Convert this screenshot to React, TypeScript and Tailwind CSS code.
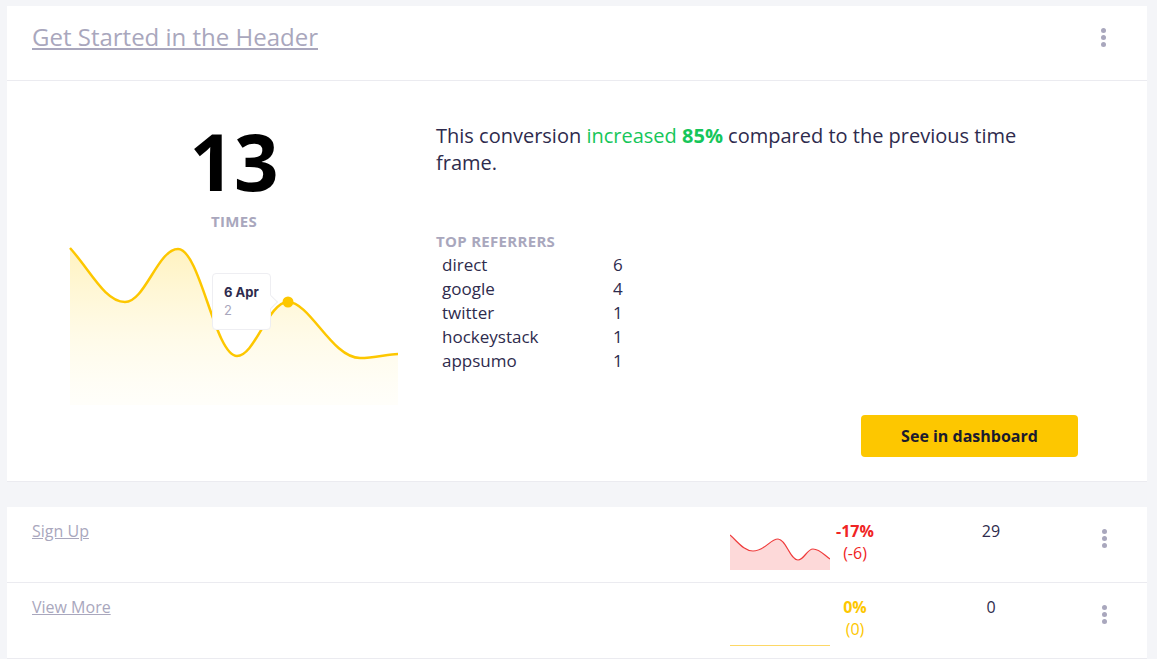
import React from "react";

const Kebab = () => (
  <div className="flex flex-col gap-[2px] items-center">
    <span className="w-[5px] h-[5px] rounded-full bg-[#a9a7bd]" />
    <span className="w-[5px] h-[5px] rounded-full bg-[#a9a7bd]" />
    <span className="w-[5px] h-[5px] rounded-full bg-[#a9a7bd]" />
  </div>
);

const MainChart = () => (
  <div className="relative w-[328px] h-[160px]">
    <svg width="328" height="160" viewBox="0 0 328 160" className="absolute inset-0 overflow-visible">
      <defs>
        <linearGradient id="yg" x1="0" y1="0" x2="0" y2="1">
          <stop offset="0%" stopColor="#ffe680" stopOpacity="0.5" />
          <stop offset="100%" stopColor="#fff6cc" stopOpacity="0.1" />
        </linearGradient>
      </defs>
      <path
        d="M0,3 C20,25 35,57 55,57 C75,57 88,4 108,4 C130,4 145,111 167,111 C185,111 198,57 218,57 C240,57 262,113 290,113 C305,113 318,109 328,109 L328,160 L0,160 Z"
        fill="url(#yg)"
      />
      <path
        d="M0,3 C20,25 35,57 55,57 C75,57 88,4 108,4 C130,4 145,111 167,111 C185,111 198,57 218,57 C240,57 262,113 290,113 C305,113 318,109 328,109"
        fill="none"
        stroke="#fdc700"
        strokeWidth="2.5"
      />
      <circle cx="218" cy="57" r="5.5" fill="#fdc700" />
    </svg>
    <div className="absolute left-[142px] top-[28px] w-[59px] h-[57px] bg-white border border-[#eeeef2] rounded-[4px] pl-[11px] pt-[9px] [font-family:Inter,'Liberation_Sans',sans-serif]">
      <div className="text-[13px] font-bold text-[#2e2b4d] leading-[18px]">6 Apr</div>
      <div className="text-[13px] text-[#a9a7bd] leading-[18px]">2</div>
      <div className="absolute right-[-6px] top-[23px] w-[10px] h-[10px] bg-white rotate-45 border-t border-r border-[#eeeef2]" />
    </div>
  </div>
);

const RedSpark = () => (
  <svg width="100" height="36" viewBox="0 0 100 36">
    <path
      d="M0,1 C8,8 14,17 23,17 C35,17 40,5 48,5 C56,5 60,26 68,26 C74,26 77,15 83,15 C90,15 95,22 100,25 L100,36 L0,36 Z"
      fill="#fdd9d9"
    />
    <path
      d="M0,1 C8,8 14,17 23,17 C35,17 40,5 48,5 C56,5 60,26 68,26 C74,26 77,15 83,15 C90,15 95,22 100,25"
      fill="none"
      stroke="#ef3b3b"
      strokeWidth="1.2"
    />
  </svg>
);

const FlatSpark = () => (
  <svg width="100" height="36" viewBox="0 0 100 36">
    <path d="M0,35.5 L100,35.5" stroke="#fdd866" strokeWidth="1" />
  </svg>
);

const referrers = [
  ["direct", "6"],
  ["google", "4"],
  ["twitter", "1"],
  ["hockeystack", "1"],
  ["appsumo", "1"],
];

const Row = ({
  title,
  spark,
  pct,
  diff,
  color,
  total,
}: {
  title: string;
  spark: React.ReactNode;
  pct: string;
  diff: string;
  color: string;
  total: string;
}) => (
  <div className="h-[76px] flex border-b border-[#ebebf0]">
    <div className="w-[723px] pl-[25px] pt-[12px]">
      <span className="text-[16px] text-[#a9a7bd] underline leading-[22px]">{title}</span>
    </div>
    <div className="pt-[27px] w-[100px]">{spark}</div>
    <div className={`w-[50px] pt-[13px] flex flex-col items-center text-[16px] leading-[22px] ${color}`}>
      <span className="font-bold">{pct}</span>
      <span>{diff}</span>
    </div>
    <div className="w-[222px] pt-[13px] text-center text-[16px] leading-[22px] text-[#2e2b4d]">{total}</div>
    <div className="pt-[22px]">
      <Kebab />
    </div>
  </div>
);

export default function App() {
  return (
    <div className="w-[1157px] h-[659px] overflow-hidden bg-[#f4f5f8] pt-[6px] pl-[7px] [font-family:'Open_Sans',sans-serif]">
      <div className="w-[1140px] bg-white border-b border-[#ebebf0]">
        <div className="h-[75px] border-b border-[#ebebf0] flex items-center justify-between pl-[25px] pr-[41px]">
          <span className="text-[24px] text-[#a9a7bd] underline leading-[32px] mt-[-13px]">Get Started in the Header</span>
          <div className="mt-[-12px]">
            <Kebab />
          </div>
        </div>
        <div className="h-[400px] flex">
          <div className="w-[366px] pl-[63px] pt-[32px] flex flex-col">
            <div className="w-[328px] flex flex-col items-center">
              <div className="text-[78px] font-bold text-black leading-[96px]">13</div>
              <div className="text-[15px] font-bold tracking-[0.3px] text-[#a9a7bd] leading-[20px] mt-[2px]">TIMES</div>
            </div>
            <div className="mt-[14px]">
              <MainChart />
            </div>
          </div>
          <div className="flex-1 pl-[63px] pr-[69px] pt-[41px] flex flex-col">
            <p className="text-[20px] leading-[27px] text-[#2e2b4d] w-[600px]">
              This conversion <span className="text-[#16c65a]">increased</span>{" "}
              <span className="text-[#16c65a] font-bold">85%</span> compared to the previous time frame.
            </p>
            <div className="mt-[55px] text-[15px] font-bold tracking-[0.3px] text-[#a9a7bd] leading-[20px]">TOP REFERRERS</div>
            <div className="flex flex-col pl-[6px] mt-[2px]">
              {referrers.map(([n, v]) => (
                <div key={n} className="flex text-[17px] leading-[24px] text-[#2e2b4d]">
                  <span className="w-[171px]">{n}</span>
                  <span>{v}</span>
                </div>
              ))}
            </div>
            <div className="flex justify-end mt-[42px]">
              <button className="w-[217px] h-[42px] bg-[#fdc700] rounded-[4px] text-[16px] font-bold text-[#1b1a2e]">
                See in dashboard
              </button>
            </div>
          </div>
        </div>
      </div>
      <div className="w-[1140px] bg-white mt-[25px]">
        <Row title="Sign Up" spark={<RedSpark />} pct="-17%" diff="(-6)" color="text-[#f02424]" total="29" />
        <Row title="View More" spark={<FlatSpark />} pct="0%" diff="(0)" color="text-[#fdc700]" total="0" />
      </div>
    </div>
  );
}
